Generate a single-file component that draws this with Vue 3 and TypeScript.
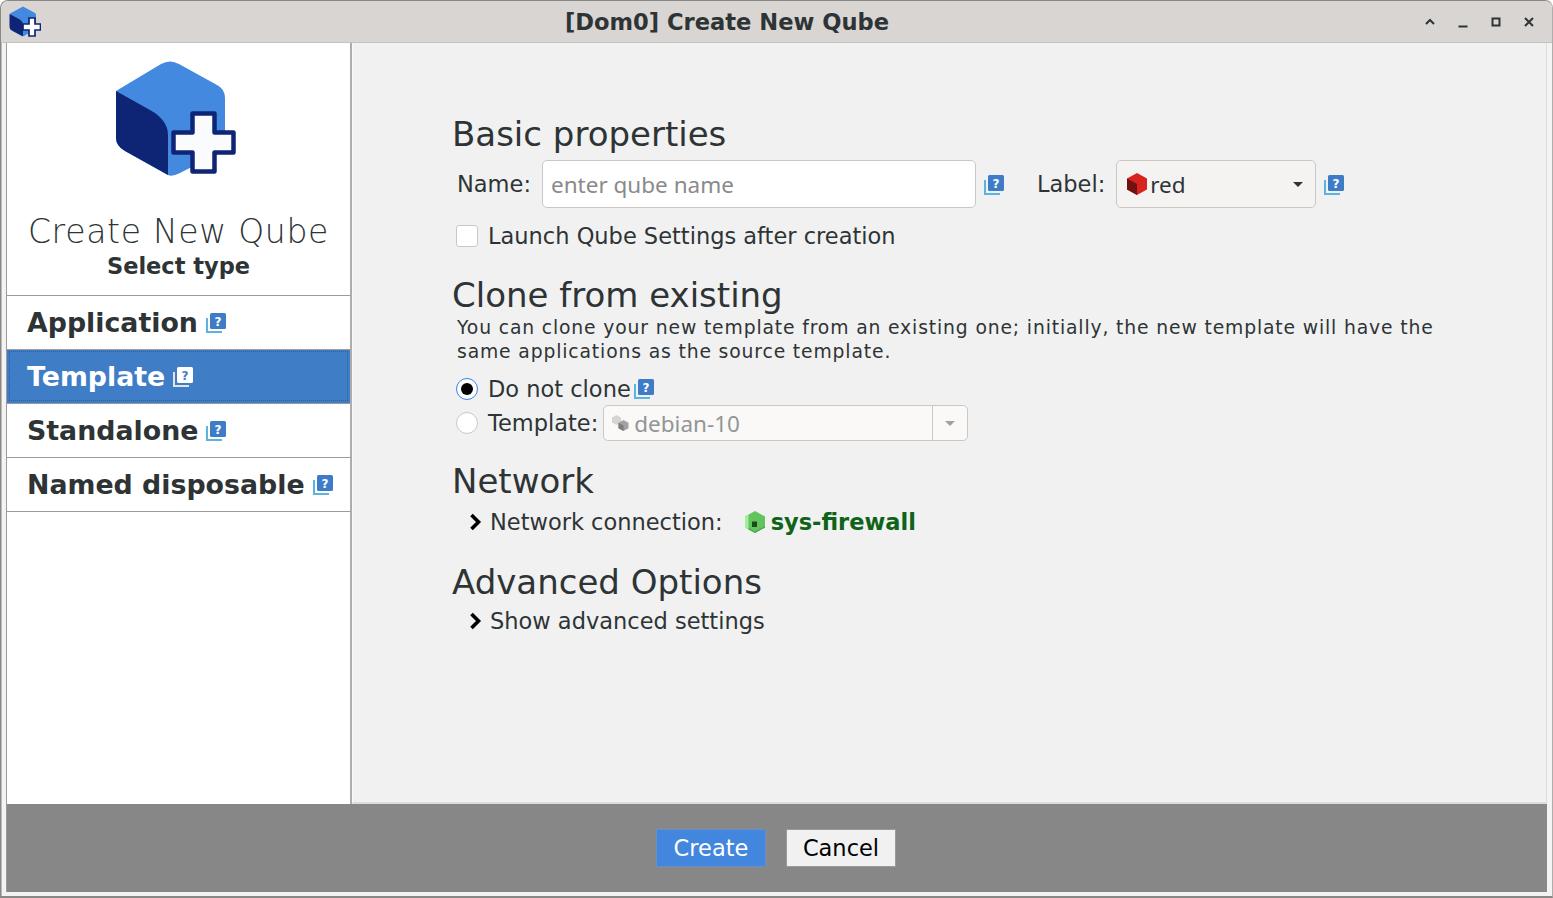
<template>
  <div class="window">
    <svg class="defs" width="0" height="0" aria-hidden="true">
      <defs>
        <symbol id="help" viewBox="0 0 20 20">
          <path d="M1 5V19h15" fill="none" stroke="var(--help-back)" stroke-width="2" />
          <rect x="4" y="0" width="16" height="16" rx="1.5" fill="var(--help-front)" />
          <text x="12" y="12.500" text-anchor="middle" class="help-mark">?</text>
        </symbol>
      </defs>
    </svg>

    <header class="titlebar">
      <svg class="app-icon" viewBox="0 0 32 32">
        <path d="M14 .5l12 6.500q1 .6 1 2V23l-12 7-1 .3q-1 0-2-.6l-9-5q-2-1-2-3V7.500z" fill="#4489e0" />
        <path d="M.5 8l9.500 5q4 2 4 6v11.300L3 24.500q-2.500-1.200-2.500-3.500z" fill="#0e2575" />
        <path d="M20 12h6v6h5.500v6H26v6h-6v-6h-6v-6h6z" fill="#fff" stroke="#0e2575" stroke-width="1.700" />
      </svg>
      <h1 class="title">[Dom0] Create New Qube</h1>
      <div class="win-buttons">
        <svg viewBox="0 0 12 12"><path d="M2 8l4-4 4 4" fill="none" stroke="#2e3436" stroke-width="2" /></svg>
        <svg viewBox="0 0 12 12"><path d="M1.500 10.500h9" fill="none" stroke="#2e3436" stroke-width="2" /></svg>
        <svg viewBox="0 0 12 12"><path d="M2.500 2.500h7v7h-7z" fill="none" stroke="#2e3436" stroke-width="2" /></svg>
        <svg viewBox="0 0 12 12"><path d="M2 2l8 8M10 2l-8 8" fill="none" stroke="#2e3436" stroke-width="2" /></svg>
      </div>
    </header>

    <div class="body">
      <div class="main">
        <aside class="sidebar">
          <div class="brand">
            <svg class="logo" viewBox="116 60 120 117">
              <path d="M161 64Q170 59 179 64L217 85Q225 89 225 98V150L180 173Q172 177 168 175L125 151Q116 146 116 138V91Z" fill="#4489e0" />
              <path d="M116 91L150 110Q168 120 168 135V175L125 151Q116 146 116 138Z" fill="#0e2575" />
              <path d="M192.500 113.500H214.500V132.500H233.500V152.500H214.500V171.500H192.500V152.500H173.500V132.500H192.500Z" fill="#f9fbfd" stroke="#0e2575" stroke-width="4.500" stroke-linejoin="round" />
            </svg>
            <div class="brand-title">Create New Qube</div>
            <div class="brand-sub">Select type</div>
          </div>
          <ul class="types">
            <li v-for="t in types" :key="t" class="type" :class="{ active: t === selected }">
              <span>{{ t }}</span>
              <svg class="help"><use href="#help" /></svg>
            </li>
          </ul>
        </aside>

        <section class="content">
          <h2 class="heading first">Basic properties</h2>
          <div class="name-row">
            <label class="lbl">Name:</label>
            <div class="input">enter qube name</div>
            <svg class="help low"><use href="#help" /></svg>
            <label class="lbl label-lbl">Label:</label>
            <div class="select">
              <svg class="mini-cube" viewBox="0 0 20 22">
                <path d="M10 0l10 5.500v11L10 22 0 16.500v-11z" fill="#d9231f" />
                <path d="M0 5.500l10 5.500v11L0 16.500z" fill="#6e1212" />
              </svg>
              <span>red</span>
              <i class="caret"></i>
            </div>
            <svg class="help low"><use href="#help" /></svg>
          </div>
          <div class="check-row">
            <span class="check"></span>
            <span>Launch Qube Settings after creation</span>
          </div>

          <h2 class="heading clone">Clone from existing</h2>
          <p class="desc">You can clone your new template from an existing one; initially, the new template will have the same applications as the source template.</p>
          <div class="radio-row first-radio">
            <span class="radio on"></span>
            <span>Do not clone</span>
            <svg class="help tight"><use href="#help" /></svg>
          </div>
          <div class="radio-row">
            <span class="radio"></span>
            <span>Template:</span>
            <div class="combo">
              <svg class="grey-cubes" viewBox="0 0 18 16">
                <path d="M4.500 0l4.500 2.500v5L4.500 10 0 7.500v-5z" fill="#d6d5d3" />
                <path d="M11.500 5l5 2.800v5.400l-5 2.800-5-2.800V7.800z" fill="#a3a2a0" />
                <path d="M6.500 7.800l5 2.800V16l-5-2.800z" fill="#7e7d7b" />
              </svg>
              <span class="combo-text">debian-10</span>
              <span class="combo-arrow"><i class="caret grey"></i></span>
            </div>
          </div>

          <h2 class="heading network">Network</h2>
          <div class="expander first-exp">
            <svg class="chev" viewBox="0 0 13 18"><path d="M2.500 2l7 7-7 7" fill="none" stroke="#000" stroke-width="3.600" /></svg>
            <span>Network connection:</span>
            <svg class="mini-cube green" viewBox="0 0 20 22">
              <path d="M10 0l10 5.500v11L10 22 0 16.500v-11z" fill="#62c45f" />
              <path d="M0 5.500l3.500-2V18.500L0 16.500z" fill="#a3ee9b" />
              <path d="M3.500 18.500L10 22l10-5.500v-1.500l-10 5.500-6.500-3.500z" fill="#4ea84b" />
              <path d="M7 10.500h5v5.500H7z" fill="#1d4a1b" />
            </svg>
            <strong class="fw">sys-firewall</strong>
          </div>

          <h2 class="heading advanced">Advanced Options</h2>
          <div class="expander second-exp">
            <svg class="chev" viewBox="0 0 13 18"><path d="M2.500 2l7 7-7 7" fill="none" stroke="#000" stroke-width="3.600" /></svg>
            <span>Show advanced settings</span>
          </div>
        </section>
      </div>

      <footer class="footer">
        <button class="btn primary">Create</button>
        <button class="btn">Cancel</button>
      </footer>
    </div>
  </div>
</template>

<script setup lang="ts">
const types: string[] = ['Application', 'Template', 'Standalone', 'Named disposable']
const selected = 'Template'
</script>

<style>
html, body { margin: 0; background: #fff; }
</style>

<style scoped>
.window {
  --help-back: #5cb3de;
  --help-front: #3f7cc7;
  --help-mark: #fff;
  box-sizing: border-box;
  height: 898px;
  width: 1553px;
  overflow: hidden;
  display: flex;
  flex-direction: column;
  background: #f4f3f2;
  border: 1px solid #8a8886;
  border-right-color: #b0aeac;
  border-bottom-width: 2px;
  border-radius: 8px 8px 0 0;
  box-shadow: inset 1px 0 #bdbbb9;
  font-family: "DejaVu Sans", sans-serif;
  color: #2e3436;
  font-size: 22.500px;
}
.defs { position: absolute; }
.help-mark { font: bold 12px "DejaVu Sans", sans-serif; fill: var(--help-mark); }

.titlebar {
  height: 42px;
  box-sizing: border-box;
  flex: none;
  display: flex;
  align-items: center;
  background: #d9d5d2;
  border-bottom: 1px solid #c8c2bd;
  position: relative;
}
.app-icon { width: 32px; height: 32px; margin-left: 8px; }
.title {
  position: absolute;
  left: 0;
  right: 99px;
  top: 6px;
  margin: 0;
  text-align: center;
  font-size: 22.600px;
  line-height: 30px;
  font-weight: 700;
  color: #2e3436;
}
.win-buttons {
  margin-left: auto;
  margin-right: 17px;
  display: flex;
  gap: 21px;
}
.win-buttons svg { width: 12px; height: 12px; }

.body {
  flex: 1;
  min-height: 0;
  display: flex;
  flex-direction: column;
  margin: 0 5px 4px;
  border-left: 1px solid #9b9b9b;
}
.main { flex: 1; min-height: 0; display: flex; }

.sidebar {
  width: 343px;
  flex: none;
  background: #fff;
  border-right: 2px solid #adadad;
}
.brand {
  height: 252px;
  box-sizing: border-box;
  padding-top: 17px;
  display: flex;
  flex-direction: column;
  align-items: center;
}
.logo { width: 120px; height: 117px; margin-left: -5px; flex: none; }
.brand-title {
  margin-top: 33px;
  font-size: 33px;
  font-weight: 200;
  line-height: 43px;
  letter-spacing: .7px;
  color: #2e3436;
}
.brand-sub { font-size: 22.500px; font-weight: 700; line-height: 26px; }

.types { list-style: none; margin: 0; padding: 0; }
.type {
  height: 53px;
  border-top: 1px solid #9b9b9b;
  display: flex;
  align-items: center;
  padding-left: 20px;
  gap: 8px;
  font-size: 26.800px;
  font-weight: 700;
  white-space: nowrap;
}
.type:last-child { border-bottom: 1px solid #9b9b9b; }
.type.active {
  background: #407dc7;
  color: #fff;
  outline: 1px dotted #2f5f9a;
  outline-offset: -3px;
  --help-back: #e3e3e3;
  --help-front: #fff;
  --help-mark: #3f7cc7;
}
.help { width: 20px; height: 20px; flex: none; }
.help.low { margin-top: 2px; }

.content {
  flex: 1;
  min-width: 0;
  background: #f1f1f1;
  padding: 0 100px 0 99px;
  border-left: 1px solid #f9f9f9;
  border-right: 1px solid #dcdcdc;
  border-bottom: 2px solid #dcdcdc;
}
.heading {
  margin: 0;
  font-size: 34px;
  font-weight: 400;
  line-height: 40px;
}
.first { margin-top: 71px; }
.clone { margin-top: 23px; }
.network { margin-top: 21px; }
.advanced { margin-top: 23px; }

.name-row { display: flex; align-items: center; height: 48px; margin-top: 6px; padding-left: 5px; }
.lbl { margin-right: 11px; }
.input {
  width: 434px;
  height: 48px;
  box-sizing: border-box;
  background: #fff;
  border: 1px solid #cdc7c2;
  border-radius: 5px;
  padding-left: 8px;
  line-height: 48px;
  font-family: "Noto Sans", sans-serif;
  color: #8a8a8a;
  margin-right: 8px;
}
.label-lbl { margin-left: 33px; }
.select {
  width: 200px;
  height: 48px;
  box-sizing: border-box;
  display: flex;
  align-items: center;
  padding: 0 12px 0 10px;
  border: 1px solid #cdc7c2;
  border-radius: 5px;
  background: #f4f3f2;
  margin-right: 8px;
  font-family: "Noto Sans", sans-serif;
}
.mini-cube { width: 20px; height: 22px; margin-right: 3px; flex: none; }
.caret {
  margin-left: auto;
  border: 5px solid transparent;
  border-top-color: #2e3436;
  border-bottom: 0;
}
.caret.grey { border-top-color: #a0a0a0; margin: 0; }
.check-row { display: flex; align-items: center; gap: 10px; height: 32px; margin-top: 12px; padding-left: 4px; }
.check {
  width: 22px;
  height: 22px;
  box-sizing: border-box;
  background: #fff;
  border: 1px solid #cdc7c2;
  border-radius: 3px;
}
.desc {
  margin: 1px 0 0;
  padding-left: 5px;
  font-size: 18.750px;
  line-height: 24px;
  letter-spacing: .86px;
}
.radio-row { display: flex; align-items: center; gap: 10px; height: 34px; padding-left: 4px; }
.first-radio { margin-top: 8px; }
.radio {
  width: 22px;
  height: 22px;
  box-sizing: border-box;
  border-radius: 50%;
  background: #fff;
  border: 1px solid #cdc7c2;
  position: relative;
}
.radio.on { border-color: #3584e4; }
.radio.on::after {
  content: "";
  position: absolute;
  left: 4px;
  top: 4px;
  width: 12px;
  height: 12px;
  border-radius: 50%;
  background: #000;
}
.help.tight { margin-left: -7px; }
.combo {
  width: 365px;
  height: 36px;
  box-sizing: border-box;
  display: flex;
  align-items: center;
  margin-left: -5px;
  background: #faf9f8;
  border: 1px solid #cdc7c2;
  border-radius: 5px;
  padding-left: 8px;
  color: #929595;
  font-family: "Noto Sans", sans-serif;
}
.grey-cubes { width: 18px; height: 16px; margin-right: 4px; flex: none; }
.combo-text { flex: 1; }
.combo-arrow {
  width: 34px;
  height: 100%;
  border-left: 1px solid #cdc7c2;
  display: flex;
  align-items: center;
  justify-content: center;
}
.expander { display: flex; align-items: center; height: 34px; padding-left: 17px; }
.first-exp { margin-top: 4px; }
.second-exp { margin-top: 2px; }
.chev { width: 13px; height: 18px; margin-right: 8px; flex: none; }
.green { margin-left: 22px; margin-right: 6px; }
.fw { color: #0e6318; font-weight: 700; }

.footer {
  height: 88px;
  flex: none;
  background: #878787;
  display: flex;
  align-items: center;
  justify-content: center;
  gap: 20px;
  padding-right: 2px;
}
.btn {
  width: 110px;
  height: 38px;
  box-sizing: border-box;
  font: 22.500px "DejaVu Sans", sans-serif;
  background: #f1f1f1;
  color: #000;
  border: 1px solid #9a9a9a;
  border-radius: 0;
  padding: 0;
}
.btn.primary { background: #4386de; color: #fff; border-color: #6a8fc4; }
</style>
